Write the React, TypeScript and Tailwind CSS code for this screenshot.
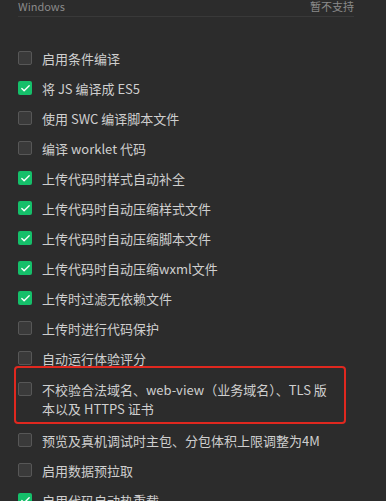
import { Check } from 'lucide-react'

type Item = { label: string; checked: boolean; marked?: boolean }

const items: Item[] = [
  { label: '启用条件编译', checked: false },
  { label: '将 JS 编译成 ES5', checked: true },
  { label: '使用 SWC 编译脚本文件', checked: false },
  { label: '编译 worklet 代码', checked: false },
  { label: '上传代码时样式自动补全', checked: true },
  { label: '上传代码时自动压缩样式文件', checked: true },
  { label: '上传代码时自动压缩脚本文件', checked: true },
  { label: '上传代码时自动压缩wxml文件', checked: true },
  { label: '上传时过滤无依赖文件', checked: true },
  { label: '上传时进行代码保护', checked: false },
  { label: '自动运行体验评分', checked: false },
  {
    label: '不校验合法域名、web-view（业务域名）、TLS 版本以及 HTTPS 证书',
    checked: false,
    marked: true,
  },
  { label: '预览及真机调试时主包、分包体积上限调整为4M', checked: false },
  { label: '启用数据预拉取', checked: false },
  { label: '启用代码自动热重载', checked: true },
]

function Box({ checked }: { checked: boolean }) {
  if (checked) {
    return (
      <span className="flex h-[14px] w-[14px] shrink-0 items-center justify-center rounded-[2px] bg-[#15bf6a]">
        <Check className="h-[11px] w-[11px] text-white" strokeWidth={3} />
      </span>
    )
  }
  return (
    <span className="block h-[14px] w-[14px] shrink-0 rounded-[2px] border border-[#575757] bg-[#3a3a3a]" />
  )
}

export default function App() {
  return (
    <div
      className="h-[501px] w-[386px] overflow-hidden bg-[#2c2c2c] pl-[18px] text-[13px] text-[#cfcfcf]"
      style={{ fontFamily: '"Noto Sans CJK SC", "Noto Sans", sans-serif' }}
    >
      <div className="flex h-[17px] w-[336px] items-start justify-between border-b border-[#393939] text-[11px] leading-[12px] text-[#8a8a8a]">
        <span>Windows</span>
        <span>暂不支持</span>
      </div>

      <ul className="mt-[26px] flex flex-col">
        {items.map((it) =>
          it.marked ? (
            <li key={it.label} className="relative flex items-start gap-[10px] py-[7px]">
              <span className="mt-[2px] flex shrink-0">
                <Box checked={it.checked} />
              </span>
              <span className="w-[292px] leading-[19px]">{it.label}</span>
              <span className="pointer-events-none absolute -top-[7px] bottom-[1px] -left-[4px] w-[332px] rounded-[4px] border-2 border-[#e0281f]" />
            </li>
          ) : (
            <li key={it.label} className="flex h-[30px] items-center gap-[10px]">
              <Box checked={it.checked} />
              <span className="leading-[19px]">{it.label}</span>
            </li>
          ),
        )}
      </ul>
    </div>
  )
}
